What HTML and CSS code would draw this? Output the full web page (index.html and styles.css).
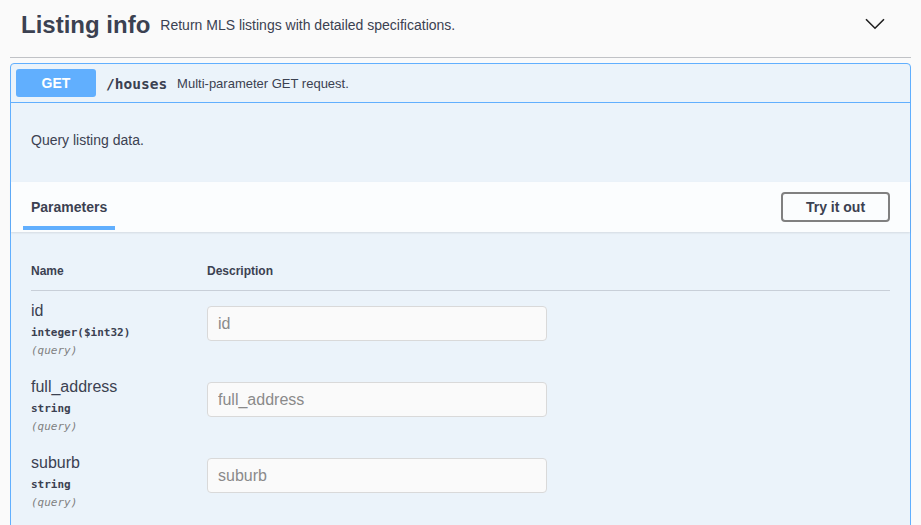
FILE: index.html
```html
<!DOCTYPE html>
<html>
<head>
<meta charset="utf-8">
<link rel="stylesheet" href="styles.css">
</head>
<body>
<div class="wrapper">
  <div class="tag">
    <span class="tag-title">Listing info</span>
    <small class="tag-desc">Return MLS listings with detailed specifications.</small>
    <span class="tag-spacer"></span>
    <svg class="chevron" width="20" height="12" viewBox="0 0 20 12"><path d="M1 1.2 L10 10.2 L19 1.2" fill="none" stroke="#1f1f1f" stroke-width="1.6"/></svg>
  </div>
  <div class="opblock">
    <div class="summary">
      <span class="method">GET</span>
      <span class="path">/houses</span>
      <span class="summary-desc">Multi-parameter GET request.</span>
    </div>
    <div class="description">Query listing data.</div>
    <div class="section-header">
      <div class="tab">Parameters</div>
      <button class="try">Try it out</button>
    </div>
    <div class="params">
      <div class="prow head">
        <div class="th">Name</div>
        <div class="th">Description</div>
      </div>
      <div class="prow">
        <div class="pname">
          <div class="name">id</div>
          <div class="type">integer($int32)</div>
          <div class="in">(query)</div>
        </div>
        <div class="pdesc"><input class="field" placeholder="id"></div>
      </div>
      <div class="prow">
        <div class="pname">
          <div class="name">full_address</div>
          <div class="type">string</div>
          <div class="in">(query)</div>
        </div>
        <div class="pdesc"><input class="field" placeholder="full_address"></div>
      </div>
      <div class="prow">
        <div class="pname">
          <div class="name">suburb</div>
          <div class="type">string</div>
          <div class="in">(query)</div>
        </div>
        <div class="pdesc"><input class="field" placeholder="suburb"></div>
      </div>
    </div>
  </div>
</div>
</body>
</html>
```
FILE: styles.css
```css
html, body {
  margin: 0;
  padding: 0;
  background: #fafafa;
  font-family: "Liberation Sans", Arial, sans-serif;
  color: #3b4151;
  overflow: hidden;
}
.wrapper {
  padding: 0 10px;
}
.tag {
  display: flex;
  align-items: center;
  min-height: 29px;
  padding: 10px 26px 18px 11px;
  border-bottom: 1px solid rgba(59, 65, 81, 0.3);
  margin-bottom: 5px;
}
.tag-title {
  font-size: 24px;
  font-weight: bold;
  margin-right: 10px;
}
.tag-desc {
  font-size: 14px;
}
.tag-spacer {
  flex: 1;
}
.chevron {
  display: block;
  margin-top: -2px;
}
.opblock {
  border: 1px solid #61affe;
  border-radius: 4px;
  background: #ebf3fa;
}
.summary {
  display: flex;
  align-items: center;
  padding: 5px;
  border-bottom: 1px solid #61affe;
}
.method {
  width: 80px;
  height: 28px;
  line-height: 28px;
  text-align: center;
  background: #61affe;
  color: #fff;
  border-radius: 3px;
  font-size: 14px;
  font-weight: bold;
}
.path {
  padding: 1px 10px 0;
  font-family: "DejaVu Sans Mono", monospace;
  font-weight: bold;
  font-size: 14.5px;
  color: #3b4151;
}
.summary-desc {
  font-size: 13px;
  padding-top: 1px;
}
.description {
  padding: 28px 20px 32px;
  font-size: 14px;
  line-height: 19px;
}
.section-header {
  display: flex;
  justify-content: space-between;
  align-items: center;
  height: 50px;
  padding: 0 20px 0 12px;
  background: rgba(255, 255, 255, 0.8);
  box-shadow: 0 1px 2px rgba(0, 0, 0, 0.1);
}
.tab {
  align-self: flex-start;
  box-sizing: border-box;
  height: 48px;
  padding: 6px 8px 0;
  display: flex;
  align-items: center;
  border-bottom: 4px solid #61affe;
  font-size: 14px;
  font-weight: bold;
}
.try {
  width: 109px;
  height: 30px;
  border: 2px solid #808080;
  border-radius: 4px;
  background: transparent;
  font-family: "Liberation Sans", Arial, sans-serif;
  font-size: 14px;
  font-weight: bold;
  color: #3b4151;
  padding: 0;
}
.params {
  padding: 20px 20px 20px;
}
.prow {
  display: grid;
  grid-template-columns: 176px 1fr;
}
.prow.head {
  border-bottom: 1px solid rgba(59, 65, 81, 0.2);
}
.th {
  font-size: 12px;
  font-weight: bold;
  line-height: 15px;
  padding: 12px 0 11px;
}
.pname {
  padding: 10px 0 7px;
}
.name {
  font-size: 16px;
  line-height: 20px;
}
.type {
  margin-top: 3px;
  font-family: "DejaVu Sans Mono", monospace;
  font-size: 11px;
  font-weight: bold;
  line-height: 18px;
}
.in {
  font-family: "DejaVu Sans Mono", monospace;
  font-size: 11px;
  font-style: italic;
  line-height: 18px;
  color: #808080;
}
.pdesc {
  padding-top: 15px;
}
.field {
  box-sizing: border-box;
  width: 340px;
  height: 35px;
  border: 1px solid #d9d9d9;
  border-radius: 4px;
  background: #fafafa;
  padding: 0 10px;
  font-family: "Liberation Sans", Arial, sans-serif;
  font-size: 16px;
  color: #3b4151;
  display: block;
}
.field::placeholder {
  color: #8a8a8a;
}
```
